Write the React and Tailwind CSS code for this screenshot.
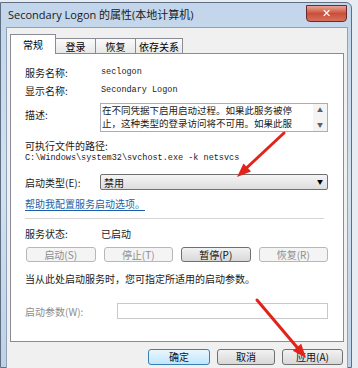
import React from 'react';

const cjk = { fontFamily: '"Noto Sans CJK SC", "Noto Sans", sans-serif' };

const Btn = ({ label, disabled = false, focus = false, className = '' }) => (
  <div
    className={`flex h-full items-center justify-center rounded-[3px] border text-[10px] leading-none ${
      disabled
        ? 'border-[#b5b8bb] bg-[#f4f4f4] text-[#8d8d8d]'
        : focus
        ? 'border-[#3c7fb1] bg-gradient-to-b from-[#eaf6fd] to-[#bee6fd] text-[#111]'
        : 'border-[#707070] bg-gradient-to-b from-[#f2f2f2] to-[#d8d8d8] text-[#111]'
    } ${className}`}
  >
    {label}
  </div>
);

const App = () => {
  return (
    <div
      className="relative h-[368px] w-[358px] overflow-hidden bg-[#e6ecf2]"
      style={cjk}
    >
      {/* window frame */}
      <div className="absolute left-0 top-[2px] h-[366px] w-[352px] rounded-tr-[6px] border border-[#5e6f83] bg-gradient-to-b from-[#c2d5ea] via-[#d3e1ef] to-[#bed1e6]">
        {/* title bar */}
        <div className="flex h-[24px] items-center justify-between pl-[7px] pr-[4px]">
          <span className="text-[11px] text-[#1a1a1a]" style={{ fontFamily: '"Open Sans", "Noto Sans CJK SC", sans-serif' }}>
            Secondary Logon 的属性(本地计算机)
          </span>
          <div className="mt-[-4px] flex h-[17px] w-[41px] items-center justify-center rounded-b-[4px] border border-[#6b2a2a] bg-gradient-to-b from-[#e8a595] via-[#c94f3c] to-[#d8705a] text-[11px] font-bold leading-none text-white" style={{ fontFamily: '"DejaVu Sans", sans-serif' }}>
            ✕
          </div>
        </div>

        {/* client area */}
        <div className="ml-[5px] mr-[3px] h-[345px] border border-[#8ea3b9] bg-[#f0f0f0]">
          {/* tabs */}
          <div className="flex h-[25px] items-end pl-[3px]">
            <div className="relative z-10 mb-[-1px] flex h-[20px] w-[46px] items-center justify-center border border-b-0 border-[#898c95] bg-white text-[10px] text-black">
              常规
            </div>
            <div className="flex h-[15px] w-[40px] items-center justify-center border border-b-0 border-l-0 border-[#898c95] bg-gradient-to-b from-[#fafafa] to-[#e8e8e8] text-[10px] text-black">
              登录
            </div>
            <div className="flex h-[15px] w-[40px] items-center justify-center border border-b-0 border-l-0 border-[#898c95] bg-gradient-to-b from-[#fafafa] to-[#e8e8e8] text-[10px] text-black">
              恢复
            </div>
            <div className="flex h-[15px] w-[47px] items-center justify-center border border-b-0 border-l-0 border-[#898c95] bg-gradient-to-b from-[#fafafa] to-[#e8e8e8] text-[10px] text-black">
              依存关系
            </div>
          </div>

          {/* panel */}
          <div className="mx-[3px] flex h-[289px] flex-col border border-[#898c95] bg-white pl-[14px] pr-[15px] pt-[9px] text-[10px] text-[#1a1a1a]">
            <div className="flex h-[18px] items-center">
              <span className="w-[76px]">服务名称:</span>
              <span className="text-[8.5px]" style={{ fontFamily: '"Liberation Mono", monospace' }}>seclogon</span>
            </div>
            <div className="flex h-[18px] items-center">
              <span className="w-[76px]">显示名称:</span>
              <span className="text-[8.5px]" style={{ fontFamily: '"Liberation Mono", monospace' }}>Secondary Logon</span>
            </div>
            <div className="mt-[4px] flex h-[29px] items-start">
              <span className="mt-[6px] w-[75px] leading-[12px]">描述:</span>
              <div className="flex h-full flex-1 border border-[#abadb3] bg-white">
                <div className="flex-1 overflow-hidden pl-[1px] text-[9.5px] leading-[13px]">
                  <div className="whitespace-nowrap">在不同凭据下启用启动过程。如果此服务被停</div>
                  <div className="whitespace-nowrap">止，这种类型的登录访问将不可用。如果此服</div>
                </div>
                <div className="flex w-[14px] flex-col items-center justify-between bg-[#f4f4f4] py-[3px] text-[6px] leading-none text-[#606060]">
                  <span>▲</span>
                  <span>▼</span>
                </div>
              </div>
            </div>
            <div className="mt-[8px] h-[12px] leading-[12px]">可执行文件的路径:</div>
            <div className="h-[12px] text-[8.5px] leading-[12px]" style={{ fontFamily: '"Liberation Mono", monospace' }}>
              C:\Windows\system32\svchost.exe -k netsvcs
            </div>
            <div className="mt-[10px] flex h-[16px] items-center">
              <span className="w-[75px]">启动类型(E):</span>
              <div className="flex h-full flex-1 items-center justify-between rounded-[2px] border border-[#707070] bg-gradient-to-b from-[#f4f4f4] to-[#dedede] pl-[3px] pr-[4px]">
                <span>禁用</span>
                <span className="text-[6px] leading-none text-black">▼</span>
              </div>
            </div>
            <div className="mt-[8px] h-[12px] leading-[12px]">
              <span className="text-[#1c5fa8] underline underline-offset-2">帮助我配置服务启动选项。</span>
            </div>
            <div className="mr-[4px] mt-[8px] h-0 border-t border-[#d5d5d5]" />
            <div className="mt-[8px] flex h-[12px] items-center">
              <span className="w-[76px]">服务状态:</span>
              <span>已启动</span>
            </div>
            <div className="mt-[8px] grid h-[15px] grid-cols-4 gap-[8px] pl-[1px]">
              <Btn label="启动(S)" disabled />
              <Btn label="停止(T)" disabled />
              <Btn label="暂停(P)" />
              <Btn label="恢复(R)" disabled />
            </div>
            <div className="mt-[11px] h-[12px] leading-[12px]">当从此处启动服务时，您可指定所适用的启动参数。</div>
            <div className="mt-[18px] flex h-[16px] items-center">
              <span className="w-[92px] text-[#8d8d8d]">启动参数(W):</span>
              <div className="h-full flex-1 border border-[#c8c9cc] bg-white" />
            </div>
          </div>

          {/* bottom buttons */}
          <div className="mr-[4px] mt-[7px] flex h-[16px] justify-end gap-[7px]">
            <Btn label="确定" focus className="w-[62px]" />
            <Btn label="取消" className="w-[58px]" />
            <Btn label="应用(A)" className="w-[61px]" />
          </div>
        </div>
      </div>

      {/* annotation arrows */}
      <svg className="pointer-events-none absolute left-0 top-0" width="358" height="368">
        <line x1="284" y1="133" x2="247" y2="167.5" stroke="#e2231a" strokeWidth="3" strokeLinecap="round" />
        <polygon points="237,177 243.5,163.5 251,171.5" fill="#e2231a" />
        <line x1="257" y1="300" x2="297" y2="347.3" stroke="#e2231a" strokeWidth="3" strokeLinecap="round" />
        <polygon points="306,358 292.8,350.8 301.2,343.8" fill="#e2231a" />
      </svg>
    </div>
  );
};

export default App;
